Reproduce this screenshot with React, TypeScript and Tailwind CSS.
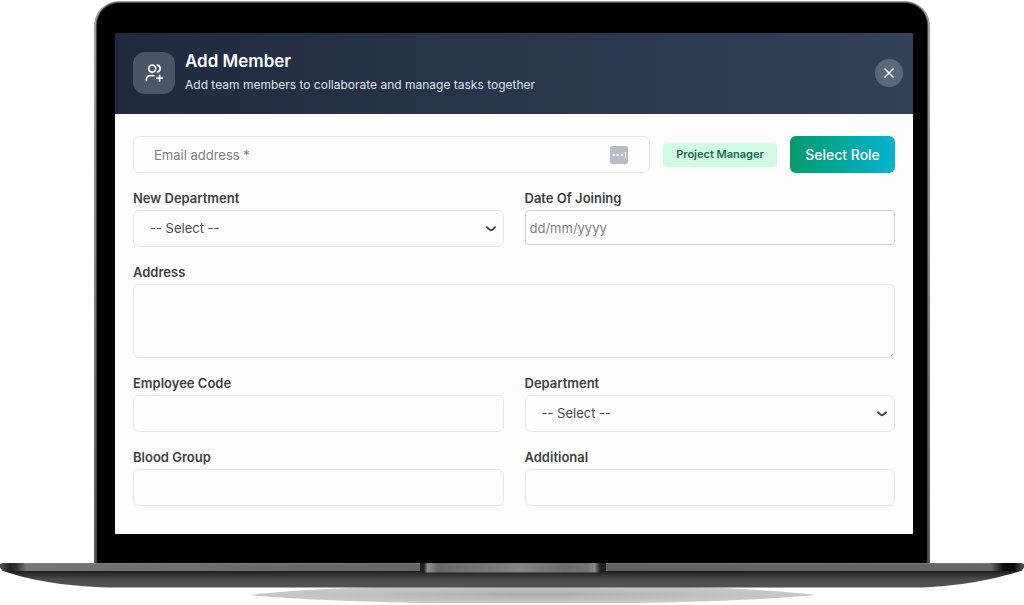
import React from "react";
import { X } from "lucide-react";

const control =
  "block w-full rounded-md border border-[#e6e7ea] bg-[#fefefe] text-[13px] text-[#4b4b4b] outline-none focus:border-teal-500";

function Field({ id, label, children }: { id: string; label: string; children: React.ReactNode }) {
  return (
    <div className="flex flex-col gap-0.5">
      <label htmlFor={id} className="text-[13px] leading-5 font-semibold text-[#3e3e3e]">
        {label}
      </label>
      {children}
    </div>
  );
}

function SelectBox({ id }: { id: string }) {
  return (
    <div className="relative">
      <select id={id} className={`${control} h-[37px] appearance-none px-4`}>
        <option>-- Select --</option>
      </select>
      <svg
        viewBox="0 0 10 6"
        className="pointer-events-none absolute top-4 right-2 h-[6px] w-[10px]"
        fill="none"
        stroke="#3c3c3c"
        strokeWidth="1.8"
        strokeLinecap="round"
        strokeLinejoin="round"
      >
        <path d="M1 1.2C2.6 2.6 3.6 3.9 5 4.3C6.4 3.9 7.4 2.6 9 1.2" />
      </svg>
    </div>
  );
}

function UsersPlusIcon() {
  return (
    <svg
      viewBox="0 0 20 20"
      className="size-5"
      fill="none"
      stroke="#f4f6f8"
      strokeWidth="1.7"
      strokeLinecap="round"
      strokeLinejoin="round"
    >
      <circle cx="8.2" cy="5.6" r="3.5" />
      <path d="M13.4 2.2C15.1 2.6 16.2 3.9 16.2 5.6C16.2 7.3 15.1 8.6 13.4 9" />
      <path d="M2.4 17.6V16.4C2.4 14.2 4 12.7 6.2 12.7H9.8" />
      <path d="M15.6 12.4V18M12.8 15.2H18.4" />
    </svg>
  );
}

function PasswordManagerIcon() {
  return (
    <svg viewBox="0 0 18 18" className="size-[18px]">
      <rect width="18" height="18" rx="2.5" fill="#b9bbc6" />
      <g fill="#ffffff">
        <circle cx="3.6" cy="9" r="1.2" />
        <circle cx="7.8" cy="9" r="1.2" />
        <circle cx="12" cy="9" r="1.2" />
        <rect x="15" y="6" width="0.9" height="6" />
      </g>
    </svg>
  );
}

function LaptopBase() {
  return (
    <svg viewBox="0 0 1024 42" preserveAspectRatio="none" className="block h-[42px] w-full" aria-hidden="true">
      <defs>
        <linearGradient id="deck" gradientUnits="userSpaceOnUse" x1="0" x2="1024" y1="0" y2="0">
          <stop offset="0" stopColor="#555555" />
          <stop offset="0.01" stopColor="#242424" />
          <stop offset="0.016" stopColor="#333333" />
          <stop offset="0.026" stopColor="#777777" />
          <stop offset="0.1" stopColor="#727272" />
          <stop offset="0.5" stopColor="#626262" />
          <stop offset="0.968" stopColor="#666666" />
          <stop offset="0.98" stopColor="#0c0c0c" />
          <stop offset="0.99" stopColor="#0c0c0c" />
          <stop offset="1" stopColor="#555555" />
        </linearGradient>
        <linearGradient id="body" x1="0" x2="0" y1="0" y2="1">
          <stop offset="0" stopColor="#151515" />
          <stop offset="0.25" stopColor="#303030" />
          <stop offset="0.55" stopColor="#4d4d4d" />
          <stop offset="1" stopColor="#525252" />
        </linearGradient>
        <linearGradient id="notch" x1="0" x2="1" y1="0" y2="0">
          <stop offset="0" stopColor="#222222" />
          <stop offset="0.02" stopColor="#8f8f8f" />
          <stop offset="0.08" stopColor="#686868" />
          <stop offset="0.55" stopColor="#838383" />
          <stop offset="0.8" stopColor="#6d6d6d" />
          <stop offset="0.93" stopColor="#747474" />
          <stop offset="0.97" stopColor="#8a8a8a" />
          <stop offset="1" stopColor="#222222" />
        </linearGradient>
        <radialGradient id="shade">
          <stop offset="0" stopColor="#a9abac" />
          <stop offset="0.5" stopColor="#bcbebe" />
          <stop offset="1" stopColor="#c9c9c9" />
        </radialGradient>
      </defs>
      <path d="M249 32C290 27 370 23 440 23H630C700 23 775 27 816 32C775 36 700 39.5 630 40H440C370 39.5 290 36 249 32Z" fill="url(#shade)" />
      <path d="M1 7H1023C1000 15 962 23 920 24.5H110C62 23.5 24 16 1 7Z" fill="url(#body)" />
      <path d="M0 1L3 0H1021L1024 1V5L1021 8H3L0 5Z" fill="url(#deck)" />
      <rect y="0" x="24" width="966" height="1" fill="#8d8d8d" opacity="0.5" />
      <rect x="420" y="0" width="186" height="8" fill="#202020" />
      <rect x="424" y="0" width="176" height="9.5" rx="1" fill="url(#notch)" />
    </svg>
  );
}

export default function App() {
  return (
    <main className="bg-white pt-px font-[Inter,'Liberation_Sans',sans-serif]">
      <div className="px-[94px]">
        <div className="rounded-t-[25px] bg-gradient-to-b from-[#a0a0a0] via-[#808080] to-[#555555] px-[3px] pt-[2px]">
          <div className="rounded-t-[22px] bg-black pt-[30px] pr-[14px] pb-[29px] pl-[18px] ring-1 ring-[#444444]">
            <section className="bg-[#fefefe]">
              <header className="flex h-[81px] items-center gap-[10px] bg-gradient-to-r from-[#1f2a3e] to-[#334159] pr-[10px] pb-0.5 pl-[18px]">
                <div className="flex size-[42px] items-center justify-center rounded-xl bg-[#4a5566]">
                  <UsersPlusIcon />
                </div>
                <div className="flex-1">
                  <h1 className="text-[17px] leading-6 font-semibold text-white">Add Member</h1>
                  <p className="text-xs leading-6 text-[#dfe4ea]">
                    Add team members to collaborate and manage tasks together
                  </p>
                </div>
                <button
                  type="button"
                  aria-label="Close"
                  className="flex size-7 items-center justify-center rounded-full bg-[#5b687a] text-white"
                >
                  <X className="size-4" strokeWidth={2.5} />
                </button>
              </header>

              <form className="flex flex-col gap-[15px] px-[18px] pt-[22px] pb-7" onSubmit={(e) => e.preventDefault()}>
                <div className="flex items-center gap-[13px]">
                  <div className="relative flex-1">
                    <input
                      type="email"
                      aria-label="Email address"
                      placeholder="Email address *"
                      className={`${control} h-[37px] pr-12 pl-5 placeholder:text-[#7d7d7d]`}
                    />
                    <span className="pointer-events-none absolute inset-y-0 right-[22px] flex items-center">
                      <PasswordManagerIcon />
                    </span>
                  </div>
                  <span className="flex h-6 w-[114px] items-center justify-center rounded bg-[#d1fae5] text-[11px] font-semibold text-[#1c6b4f]">
                    Project Manager
                  </span>
                  <button
                    type="button"
                    className="h-[37px] w-[105px] rounded-md bg-gradient-to-r from-[#099a6b] to-[#06b4d0] text-sm font-medium text-white"
                  >
                    Select Role
                  </button>
                </div>

                <div className="grid grid-cols-2 gap-x-[21px]">
                  <Field id="new-department" label="New Department">
                    <SelectBox id="new-department" />
                  </Field>
                  <Field id="joining" label="Date Of Joining">
                    <input
                      id="joining"
                      type="text"
                      placeholder="dd/mm/yyyy"
                      className="block h-[35px] w-full rounded border border-[#cdcfd3] bg-[#fefefe] px-1 text-[13px] outline-none placeholder:text-[#808080] focus:border-teal-500"
                    />
                  </Field>
                </div>

                <Field id="address" label="Address">
                  <div className="relative">
                    <textarea id="address" className={`${control} h-[74px] resize-none px-4 py-2`} />
                    <svg
                      viewBox="0 0 4 4"
                      className="pointer-events-none absolute right-px bottom-px size-1"
                      stroke="#8a8a8a"
                      strokeWidth="0.8"
                    >
                      <path d="M0.8 3.2L3.2 0.8" />
                    </svg>
                  </div>
                </Field>

                <div className="grid grid-cols-2 gap-x-[21px] gap-y-[15px]">
                  <Field id="employee-code" label="Employee Code">
                    <input id="employee-code" type="text" className={`${control} h-[37px] px-4`} />
                  </Field>
                  <Field id="department" label="Department">
                    <SelectBox id="department" />
                  </Field>
                  <Field id="blood-group" label="Blood Group">
                    <input id="blood-group" type="text" className={`${control} h-[37px] px-4`} />
                  </Field>
                  <Field id="additional" label="Additional">
                    <input id="additional" type="text" className={`${control} h-[37px] px-4`} />
                  </Field>
                </div>
              </form>
            </section>
          </div>
        </div>
      </div>
      <LaptopBase />
    </main>
  );
}
